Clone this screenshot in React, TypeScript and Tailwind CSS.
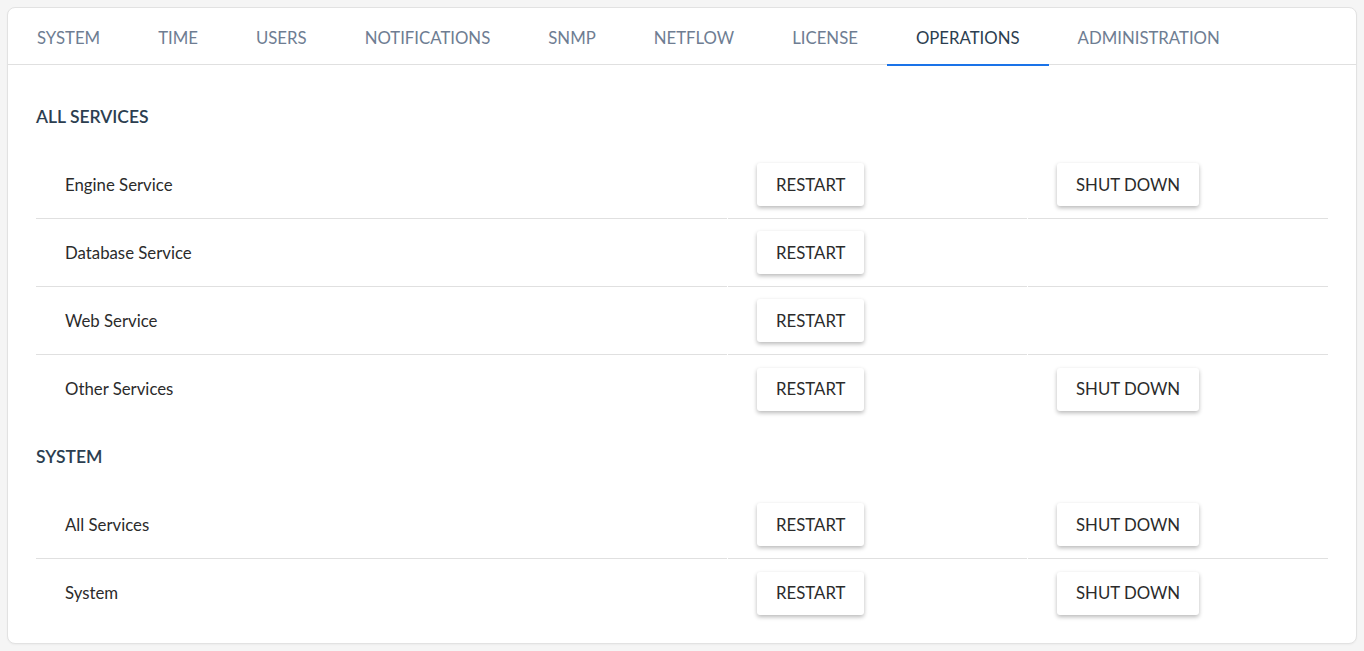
const tabs = [
  'SYSTEM',
  'TIME',
  'USERS',
  'NOTIFICATIONS',
  'SNMP',
  'NETFLOW',
  'LICENSE',
  'OPERATIONS',
  'ADMINISTRATION',
]

type Row = { name: string; restart: boolean; shutdown: boolean }

const sections: { title: string; rows: Row[] }[] = [
  {
    title: 'ALL SERVICES',
    rows: [
      { name: 'Engine Service', restart: true, shutdown: true },
      { name: 'Database Service', restart: true, shutdown: false },
      { name: 'Web Service', restart: true, shutdown: false },
      { name: 'Other Services', restart: true, shutdown: true },
    ],
  },
  {
    title: 'SYSTEM',
    rows: [
      { name: 'All Services', restart: true, shutdown: true },
      { name: 'System', restart: true, shutdown: true },
    ],
  },
]

function ActionButton({ label }: { label: string }) {
  return (
    <button className="h-[43px] rounded-[3px] bg-white px-[19px] text-[16.8px] text-[#2b2b2b] shadow-[0_2px_4px_rgba(0,0,0,0.28)]">
      {label}
    </button>
  )
}

export default function App() {
  return (
    <div className="min-h-screen bg-[#f5f5f5] p-[7px] font-['Lato',sans-serif]">
      <div className="rounded-lg border border-[#e2e2e2] bg-white shadow-[0_1px_2px_rgba(0,0,0,0.04)]">
        <nav className="flex border-b border-[#e0e0e0]">
          {tabs.map((tab) => {
            const active = tab === 'OPERATIONS'
            return (
              <div
                key={tab}
                className={`relative flex h-[56px] items-center px-[29px] pt-[3px] text-[16.75px] ${
                  active ? 'text-[#2c3e50]' : 'text-[#6e7d92]'
                }`}
              >
                {tab}
                {active && <span className="absolute bottom-[-2px] left-0 right-0 h-[2px] bg-[#1a73e8]" />}
              </div>
            )
          })}
        </nav>

        <div className="px-[28px] pt-[18px] pb-[16px]">
          {sections.map((section) => (
            <div key={section.title}>
              <div className="flex h-[68px] items-center text-[17.5px] font-semibold text-[#2c3e50]">
                {section.title}
              </div>
              {section.rows.map((row, i) => {
                const last = i === section.rows.length - 1
                const border = last ? '' : 'border-b border-[#e0e0e0]'
                return (
                  <div key={row.name} className="grid grid-cols-[1fr_299px_300px] gap-x-px">
                    <div className={`flex h-[68px] items-center pl-[29px] text-[16.8px] text-[#2b2b2b] ${border}`}>
                      {row.name}
                    </div>
                    <div className={`flex h-[68px] items-center pl-[29px] ${border}`}>
                      {row.restart && <ActionButton label="RESTART" />}
                    </div>
                    <div className={`flex h-[68px] items-center pl-[29px] ${border}`}>
                      {row.shutdown && <ActionButton label="SHUT DOWN" />}
                    </div>
                  </div>
                )
              })}
            </div>
          ))}
        </div>
      </div>
    </div>
  )
}
